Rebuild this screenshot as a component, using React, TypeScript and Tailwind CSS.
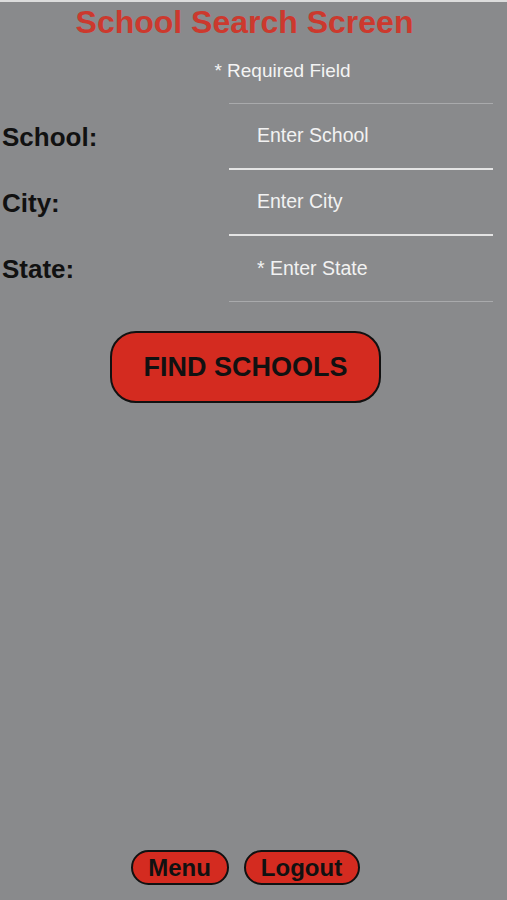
import React from "react";

export default function App() {
  const rows = [
    { label: "School:", ph: "Enter School", border: "border-b-2 border-[#e4e4e4]" },
    { label: "City:", ph: "Enter City", border: "border-b-2 border-[#e4e4e4]" },
    { label: "State:", ph: "* Enter State", border: "border-b border-[#a9aaac]" },
  ];
  return (
    <div
      className="w-[507px] h-[900px] bg-[#898a8c] flex flex-col overflow-hidden"
      style={{ fontFamily: '"Liberation Sans", Arial, sans-serif' }}
    >
      <div className="h-[2px] bg-[#dcdcdc]" />
      <div className="mt-[2px] flex justify-center pr-[18px]">
        <h1 className="text-[32px] leading-[36px] font-bold text-[#cc392e]">School Search Screen</h1>
      </div>
      <div className="mt-[19px] flex justify-center pl-[58px]">
        <span className="text-[19px] leading-[24px] text-[#f4f4f4]">* Required Field</span>
      </div>
      <div className="mt-[20px] flex flex-col">
        <div className="flex">
          <div className="w-[229px]" />
          <div className="w-[264px] border-t border-[#a9aaac]" />
        </div>
        {rows.map((r) => (
          <div key={r.label} className="flex h-[66px]">
            <div className="w-[229px] pl-[2px] flex items-center">
              <span className="text-[26px] font-bold text-[#111111]">{r.label}</span>
            </div>
            <div className={`w-[264px] flex items-center pl-[28px] ${r.border}`}>
              <input
                placeholder={r.ph}
                className="w-full bg-transparent outline-none text-[19.5px] text-white placeholder:text-[#f2f2f2]"
                style={{ fontFamily: '"Liberation Sans", Arial, sans-serif' }}
              />
            </div>
          </div>
        ))}
      </div>
      <div className="mt-[29px] flex justify-center pr-[16px]">
        <button className="w-[271px] h-[72px] rounded-[26px] border-2 border-[#111111] bg-[#d42b20] text-[27px] font-bold text-[#111111]">
          FIND SCHOOLS
        </button>
      </div>
      <div className="mt-auto pb-[15px] flex justify-center gap-[15px] pr-[17px]">
        <button className="w-[98px] h-[35px] rounded-full border-2 border-[#111111] bg-[#d42b20] text-[24px] font-bold text-[#111111] leading-none">
          Menu
        </button>
        <button className="w-[116px] h-[35px] rounded-full border-2 border-[#111111] bg-[#d42b20] text-[24px] font-bold text-[#111111] leading-none">
          Logout
        </button>
      </div>
    </div>
  );
}
